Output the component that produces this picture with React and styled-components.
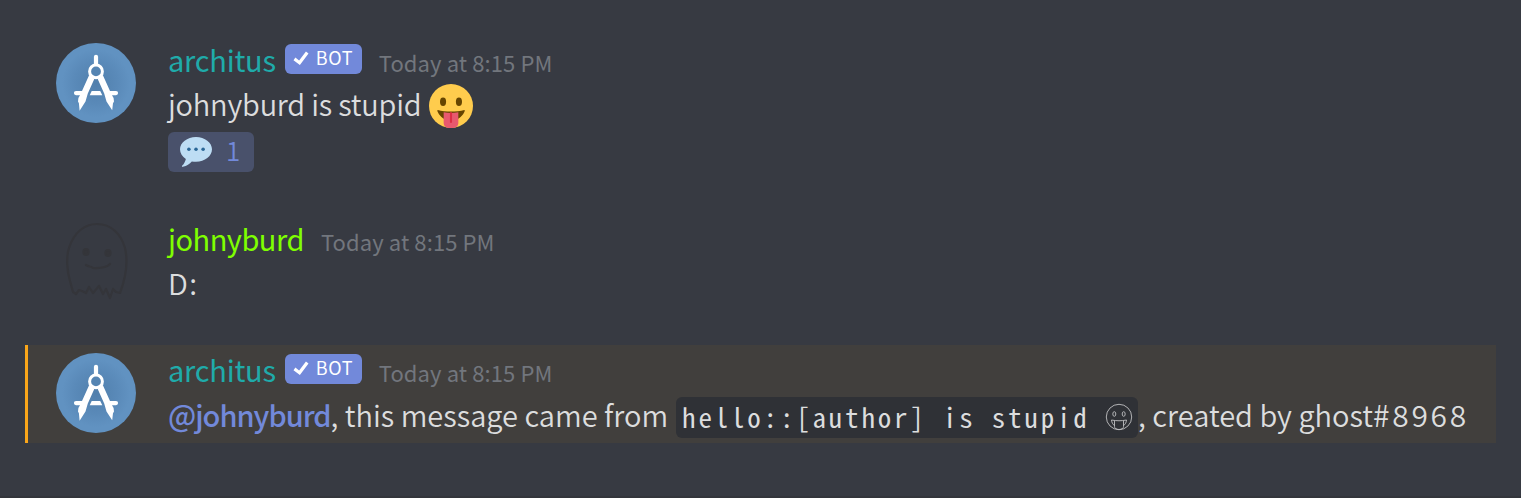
import React from 'react';
import styled, { createGlobalStyle } from 'styled-components';

const GlobalStyle = createGlobalStyle`
  * { box-sizing: border-box; }
  body {
    margin: 0;
    background: #373a42;
    font-family: 'Noto Sans CJK JP', 'Noto Sans', sans-serif;
    color: #dcddde;
  }
`;

const Page = styled.main`
  display: flex;
  flex-direction: column;
  height: 498px;
  padding: 35px 25px 0;
  border-bottom: 2px solid #33353b;
  overflow: hidden;
`;

const Message = styled.article`
  display: flex;
  gap: 32px;
  height: ${(p) => p.$height}px;
  padding: 8px 0 8px 28px;
  border-left: 3px solid ${(p) => (p.$mentioned ? '#faa61a' : 'transparent')};
  background: ${(p) => (p.$mentioned ? '#413f3d' : 'transparent')};
`;

const Avatar = styled.svg`
  flex: none;
  width: 80px;
  height: 80px;
`;

const Body = styled.div`
  display: flex;
  flex-direction: column;
  align-items: flex-start;
`;

const Header = styled.header`
  display: flex;
  flex: none;
  align-items: baseline;
  height: 41px;
  line-height: 33px;
  white-space: nowrap;
`;

const Name = styled.span`
  color: ${(p) => p.$color};
  font-size: 29px;
  font-weight: 400;
  letter-spacing: ${(p) => p.$spacing}px;
`;

const BotTag = styled.span`
  display: flex;
  align-self: flex-start;
  width: 77px;
  height: 30px;
  margin: 1px 0 0 9px;
  padding-left: 1px;
  border-radius: 6px;
  background: #7289da;
  color: #fff;
  font-size: 18px;
  letter-spacing: 0.6px;
  line-height: 27px;
`;

const Check = styled.svg`
  width: 30px;
  height: 30px;
`;

const Time = styled.time`
  margin-left: 17px;
  color: #72767d;
  font-size: 22px;
  letter-spacing: 0.1px;
`;

const Line = styled.p`
  display: flex;
  flex: none;
  align-items: baseline;
  height: 44px;
  margin: 0;
  font-size: 29px;
  font-weight: 350;
  line-height: ${(p) => p.$leading || 38}px;
  white-space: pre;
  letter-spacing: ${(p) => p.$spacing || 0}px;
`;

const Mention = styled.span`
  color: #7289da;
  font-weight: 500;
  letter-spacing: -0.98px;
`;

const UserTag = styled.span`
  font-size: 30px;
  letter-spacing: 2.7px;
`;

const Code = styled.code`
  display: flex;
  align-self: flex-start;
  align-items: center;
  width: 462px;
  height: 41px;
  margin: 3px 0 0 8px;
  padding: 0 5px 1px 6px;
  border-radius: 6px;
  background: #2f3136;
  font-family: 'Noto Sans Mono CJK JP', 'Liberation Mono', monospace;
  font-size: 27px;
  font-weight: 400;
  letter-spacing: 2.8px;
  line-height: 40px;
`;

const OutlineFace = styled.svg`
  flex: none;
  width: 28px;
  height: 28px;
  margin-left: auto;
`;

const Emoji = styled.svg`
  align-self: flex-start;
  width: 44px;
  height: 44px;
  margin-left: 8px;
`;

const Reaction = styled.div`
  display: flex;
  align-items: center;
  width: 86px;
  height: 40px;
  margin-top: 4px;
  padding-left: 12px;
  border-radius: 6px;
  background: #49516b;
  color: #7289da;
  font-size: 26px;
  font-weight: 350;
  line-height: 36px;
`;

const Count = styled.span`
  height: 40px;
`;

const Bubble = styled.svg`
  width: 32px;
  height: 32px;
  margin-right: 14px;
`;

const CompassAvatar = ({ id }) => (
  <Avatar viewBox="0 0 80 80">
    <defs>
      <radialGradient id={id}>
        <stop offset="0" stopColor="#507fac" />
        <stop offset="0.55" stopColor="#5a8ab9" />
        <stop offset="0.85" stopColor="#6192c1" />
      </radialGradient>
    </defs>
    <circle cx="40" cy="40" r="40" fill={`url(#${id})`} />
    <g fill="#fff">
      <rect x="37.9" y="11.7" width="4.2" height="13" rx="2.1" />
      <path d="M33.2 32 38.3 36 31.8 50.5 29.5 58.5 23.6 67.8 22.9 60.2 22 58.5 22.4 55 24 52.2H20a2.1 2.1 0 0 1 0-4.2h6Z" />
      <path d="M46.8 32 41.7 36 48.2 50.5 50.5 58.5 56.2 67.3 57 60.2 58 58.5 57.6 55 56 52.2H60a2.1 2.1 0 0 0 0-4.2H54Z" />
      <path d="M35.7 48h8.5l2.1 4.2H33.7Z" />
    </g>
    <circle cx="40" cy="28.4" r="6.4" fill="#5484b2" stroke="#fff" strokeWidth="3" />
  </Avatar>
);

const GhostAvatar = () => (
  <Avatar viewBox="0 0 80 80" fill="none" stroke="#34353a" strokeWidth="2.2" strokeLinecap="round" strokeLinejoin="round">
    <path d="M17 70 14 59C11 49 10 35 13 26 18 10 29 2 41 2 55 2 65 12 69 26 72 39 70 55 64 71L60 70 57 67 54 76 50 67 47 72 43 64 37 71 33 65 30 71 26 69 23 68 20 72Z" />
    <path d="M30 43c3 2 5 1 7 3 5 0 12 1 17-4" />
    <ellipse cx="30" cy="30" rx="2.5" ry="2.9" fill="#34353a" />
    <ellipse cx="52" cy="31" rx="2.5" ry="2.9" fill="#34353a" />
  </Avatar>
);

const TongueEmoji = () => (
  <Emoji viewBox="0 0 36 36">
    <circle cx="18" cy="18" r="18" fill="#ffcc4d" />
    <ellipse cx="11.5" cy="14.5" rx="2.5" ry="3.5" fill="#664500" />
    <ellipse cx="24.5" cy="14.5" rx="2.5" ry="3.5" fill="#664500" />
    <path d="M7.2 21.3c3 .9 7 1.2 10.8 1.2s7.8-.3 10.9-1.2c.6 0 .3 1 0 1.7C26.8 27.5 23 29.8 18 29.8S9.2 27.5 7.2 23c-.3-.7-.6-1.7 0-1.7Z" fill="#664500" />
    <path d="M12 23.2q6 .9 12 0V32c0 2.2-1.8 4-4 4h-4c-2.2 0-4-1.8-4-4Z" fill="#e8596e" />
    <path d="M18 23.7V31" stroke="#dd2e44" strokeWidth="1.7" strokeLinecap="round" />
  </Emoji>
);

const BotBadge = () => (
  <BotTag>
    <Check viewBox="0 0 16 16">
      <path d="M7.4 11.17 4 8.62 5 7.26l2 1.53L10.64 4l1.36 1Z" fill="#fff" />
    </Check>
    BOT
  </BotTag>
);

const SpeechEmoji = () => (
  <Bubble viewBox="0 0 36 36">
    <path d="M18 1C8.06 1 0 7.27 0 15c0 4.37 2.57 8.27 6.6 10.83C6.1 28.1 4.9 31 2.3 33.6c-.5.8.3 1.3 1 1.1 4.4-1.2 7.5-3.3 10-6.1 1.5.3 3.1.4 4.7.4 9.94 0 18-6.27 18-14S27.94 1 18 1Z" fill="#bdddf4" />
    <g fill="#2a6797">
      <circle cx="10" cy="15" r="2" />
      <circle cx="18" cy="15" r="2" />
      <circle cx="26" cy="15" r="2" />
    </g>
  </Bubble>
);

const OutlineTongueFace = () => (
  <OutlineFace viewBox="0 0 28 28" fill="none" stroke="#bfc0c2" strokeWidth="0.9">
    <circle cx="14" cy="14" r="12.7" />
    <ellipse cx="9.3" cy="11" rx="1.5" ry="2.3" />
    <ellipse cx="18.7" cy="11" rx="1.5" ry="2.3" />
    <path d="M6.5 17c5 1 10 1 15 0-.2 2.5-1.2 4.3-3 5.7M6.5 17c.2 2.5 1.2 4.3 3 5.7M9.5 17.8v5.7c0 1.9 1.8 3 4.5 3s4.5-1.1 4.5-3v-5.7" />
  </OutlineFace>
);

export default function App() {
  return (
    <>
      <GlobalStyle />
      <Page>
        <Message $height={179}>
          <CompassAvatar id="avatar-first" />
          <Body>
            <Header>
              <Name $color="#1fabaa" $spacing={-0.25}>architus</Name>
              <BotBadge />
              <Time>Today at 8:15 PM</Time>
            </Header>
            <Line $spacing={-0.22}>johnyburd is stupid<TongueEmoji /></Line>
            <Reaction><SpeechEmoji /><Count>1</Count></Reaction>
          </Body>
        </Message>
        <Message $height={131}>
          <GhostAvatar />
          <Body>
            <Header>
              <Name $color="#7fff00" $spacing={-0.5}>johnyburd</Name>
              <Time>Today at 8:15 PM</Time>
            </Header>
            <Line $spacing={1.5}>D:</Line>
          </Body>
        </Message>
        <Message $height={98} $mentioned>
          <CompassAvatar id="avatar-reply" />
          <Body>
            <Header>
              <Name $color="#1fabaa" $spacing={-0.25}>architus</Name>
              <BotBadge />
              <Time>Today at 8:15 PM</Time>
            </Header>
            <Line $leading={40} $spacing={0}>
              <Mention>@johnyburd</Mention>
              <span>, this message came from</span>
              <Code>hello::[author] is stupid<OutlineTongueFace /></Code>
              <span>, created by ghost</span>
              <UserTag>#8968</UserTag>
            </Line>
          </Body>
        </Message>
      </Page>
    </>
  );
}
